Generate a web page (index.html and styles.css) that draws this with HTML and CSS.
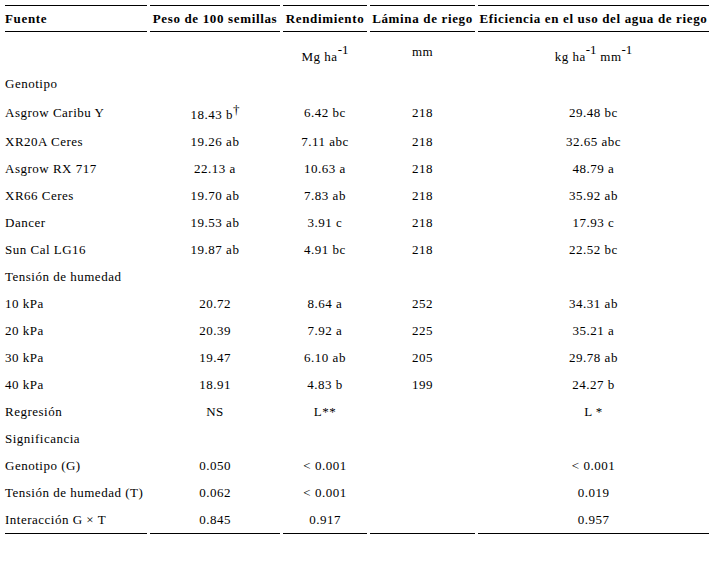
FILE: index.html
```html
<!DOCTYPE html>
<html lang="es">
<head>
<meta charset="utf-8">
<title>Tabla</title>
<link rel="stylesheet" href="styles.css">
</head>
<body>
<table class="data">
  <colgroup>
    <col class="c1"><col class="c2"><col class="c3"><col class="c4"><col class="c5">
  </colgroup>
  <thead>
    <tr>
      <th class="left">Fuente</th>
      <th>Peso de 100 semillas</th>
      <th>Rendimiento</th>
      <th>Lámina de riego</th>
      <th>Eficiencia en el uso del agua de riego</th>
    </tr>
  </thead>
  <tbody>
    <tr class="units"><td class="left"></td><td></td><td>Mg ha<sup>-1</sup></td><td>mm</td><td>kg ha<sup>-1</sup> mm<sup>-1</sup></td></tr>
    <tr><td class="left">Genotipo</td><td></td><td></td><td></td><td></td></tr>
    <tr><td class="left">Asgrow Caribu Y</td><td>18.43 b<sup class="fn">†</sup></td><td>6.42 bc</td><td>218</td><td>29.48 bc</td></tr>
    <tr><td class="left">XR20A Ceres</td><td>19.26 ab</td><td>7.11 abc</td><td>218</td><td>32.65 abc</td></tr>
    <tr><td class="left">Asgrow RX 717</td><td>22.13 a</td><td>10.63 a</td><td>218</td><td>48.79 a</td></tr>
    <tr><td class="left">XR66 Ceres</td><td>19.70 ab</td><td>7.83 ab</td><td>218</td><td>35.92 ab</td></tr>
    <tr><td class="left">Dancer</td><td>19.53 ab</td><td>3.91 c</td><td>218</td><td>17.93 c</td></tr>
    <tr><td class="left">Sun Cal LG16</td><td>19.87 ab</td><td>4.91 bc</td><td>218</td><td>22.52 bc</td></tr>
    <tr><td class="left">Tensión de humedad</td><td></td><td></td><td></td><td></td></tr>
    <tr><td class="left">10 kPa</td><td>20.72</td><td>8.64 a</td><td>252</td><td>34.31 ab</td></tr>
    <tr><td class="left">20 kPa</td><td>20.39</td><td>7.92 a</td><td>225</td><td>35.21 a</td></tr>
    <tr><td class="left">30 kPa</td><td>19.47</td><td>6.10 ab</td><td>205</td><td>29.78 ab</td></tr>
    <tr><td class="left">40 kPa</td><td>18.91</td><td>4.83 b</td><td>199</td><td>24.27 b</td></tr>
    <tr><td class="left">Regresión</td><td>NS</td><td>L**</td><td></td><td>L *</td></tr>
    <tr><td class="left">Significancia</td><td></td><td></td><td></td><td></td></tr>
    <tr><td class="left">Genotipo (G)</td><td>0.050</td><td>&lt; 0.001</td><td></td><td>&lt; 0.001</td></tr>
    <tr><td class="left">Tensión de humedad (T)</td><td>0.062</td><td>&lt; 0.001</td><td></td><td>0.019</td></tr>
    <tr class="last"><td class="left">Interacción G × T</td><td>0.845</td><td>0.917</td><td></td><td>0.957</td></tr>
  </tbody>
</table>
</body>
</html>
```
FILE: styles.css
```css
html, body {
  margin: 0;
  padding: 0;
  background: #ffffff;
}

body {
  font-family: "Liberation Serif", "Times New Roman", serif;
  font-size: 13px;
  color: #000000;
}

.data {
  border-collapse: separate;
  border-spacing: 3px 0;
  margin: 5px 0 0 2px;
  table-layout: fixed;
  width: 710px;
}

.c1 { width: 142px; }
.c2 { width: 130px; }
.c3 { width: 84px; }
.c4 { width: 105px; }
.c5 { width: 231px; }

.data th {
  font-weight: bold;
  text-align: center;
  white-space: nowrap;
  letter-spacing: 0.65px;
  padding: 5px 0 5px 0;
  border-top: 1px solid #000;
  border-bottom: 1px solid #000;
  line-height: 15px;
}

.data td {
  text-align: center;
  white-space: nowrap;
  letter-spacing: 0.5px;
  padding: 6px 0;
  line-height: 15px;
  vertical-align: middle;
}

.data .left {
  text-align: left;
}

.data tr.last td {
  border-bottom: 1px solid #000;
}

.data sup {
  font-size: 13px;
  line-height: 23px;
  vertical-align: 7px;
  letter-spacing: 0;
}

.data sup.fn {
  line-height: 14px;
  vertical-align: 5px;
}
```
